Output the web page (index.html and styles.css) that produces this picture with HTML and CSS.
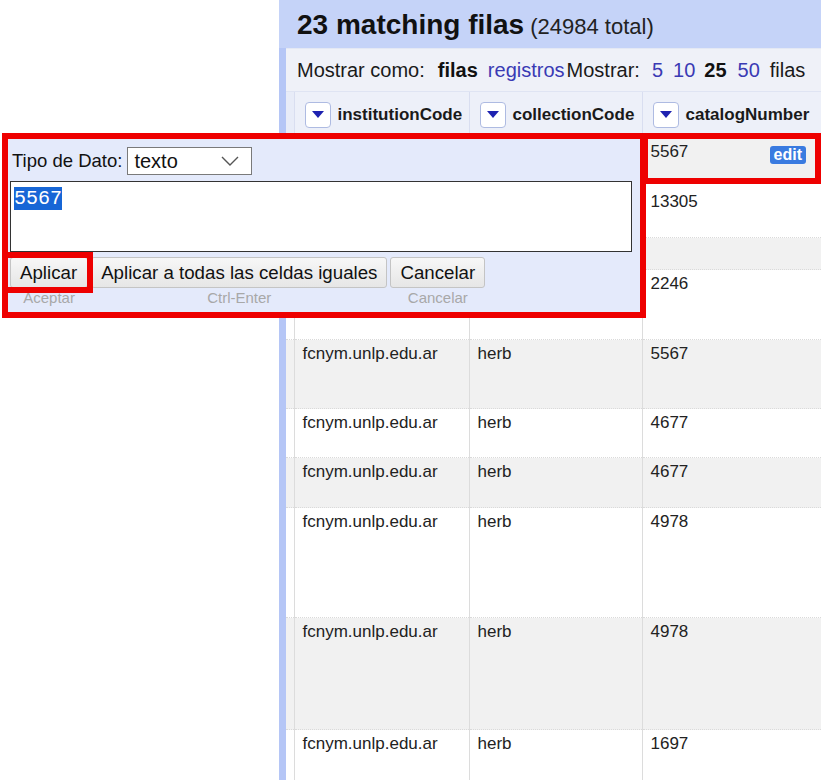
FILE: index.html
```html
<!DOCTYPE html>
<html lang="es">
<head>
<meta charset="utf-8">
<title>OpenRefine - edición de celda</title>
<link rel="stylesheet" href="styles.css">
</head>
<body>
<div class="page">
  <div class="gutter"></div>
  <div class="main">
    <div class="panel">
      <div class="summary"><span class="count">23 matching filas</span> <span class="total">(24984 total)</span></div>
      <div class="viewbar">
        <span>Mostrar como:</span>
        <span class="opt o-filas sel">filas</span>
        <span class="opt o-reg link">registros</span>
        <span class="opt o-most">Mostrar:</span>
        <span class="opt o-5 link">5</span>
        <span class="opt o-10 link">10</span>
        <span class="opt o-25 sel">25</span>
        <span class="opt o-50 link">50</span>
        <span class="opt o-f2">filas</span>
      </div>
      <table class="grid">
        <colgroup><col class="c0"><col class="c1"><col class="c2"><col class="c3"></colgroup>
        <thead>
          <tr>
            <th class="lead"></th>
            <th><div class="hcell"><span class="dd"><svg width="12" height="7" viewBox="0 0 12 7"><path d="M0 0 H12 L6 7 Z" fill="#1e22b0"/></svg></span>institutionCode</div></th>
            <th><div class="hcell"><span class="dd"><svg width="12" height="7" viewBox="0 0 12 7"><path d="M0 0 H12 L6 7 Z" fill="#1e22b0"/></svg></span>collectionCode</div></th>
            <th><div class="hcell"><span class="dd"><svg width="12" height="7" viewBox="0 0 12 7"><path d="M0 0 H12 L6 7 Z" fill="#1e22b0"/></svg></span>catalogNumber</div></th>
          </tr>
        </thead>
        <tbody>
          <tr class="odd r1"><td class="lead"></td><td></td><td></td><td class="editcell">5567<span class="edit">edit</span></td></tr>
          <tr class="r2"><td class="lead"></td><td></td><td></td><td>13305</td></tr>
          <tr class="odd r3"><td class="lead"></td><td></td><td></td><td></td></tr>
          <tr class="r4"><td class="lead"></td><td></td><td></td><td>2246</td></tr>
          <tr class="odd r5"><td class="lead"></td><td>fcnym.unlp.edu.ar</td><td>herb</td><td>5567</td></tr>
          <tr class="r6"><td class="lead"></td><td>fcnym.unlp.edu.ar</td><td>herb</td><td>4677</td></tr>
          <tr class="odd r7"><td class="lead"></td><td>fcnym.unlp.edu.ar</td><td>herb</td><td>4677</td></tr>
          <tr class="r8"><td class="lead"></td><td>fcnym.unlp.edu.ar</td><td>herb</td><td>4978</td></tr>
          <tr class="odd r9"><td class="lead"></td><td>fcnym.unlp.edu.ar</td><td>herb</td><td>4978</td></tr>
          <tr class="r10"><td class="lead"></td><td>fcnym.unlp.edu.ar</td><td>herb</td><td>1697</td></tr>
        </tbody>
      </table>
    </div>
  </div>
</div>

<div class="popup">
  <div class="typerow">
    <span class="label">Tipo de Dato:</span>
    <div class="select"><span>texto</span><svg width="18" height="10" viewBox="0 0 18 10"><path d="M1 1 L9 9 L17 1" fill="none" stroke="#555" stroke-width="1.4"/></svg></div>
  </div>
  <div class="textarea"><span class="hl">5567</span></div>
  <div class="actions">
    <button class="btn b-apply">Aplicar</button>
    <button class="btn">Aplicar a todas las celdas iguales</button>
    <button class="btn">Cancelar</button>
    <span class="hint">Aceptar</span>
    <span class="hint">Ctrl-Enter</span>
    <span class="hint">Cancelar</span>
  </div>
</div>

<div class="mark mark-popup"></div>
<div class="mark mark-apply"></div>
<div class="mark mark-cell"></div>
</body>
</html>
```

FILE: styles.css
```css
html, body {
  margin: 0;
  padding: 0;
  background: #ffffff;
  height: 780px;
  overflow: hidden;
  font-family: "Liberation Sans", Arial, sans-serif;
  color: #111;
}

.page {
  display: flex;
  height: 780px;
}

.gutter {
  width: 279px;
  flex: none;
}

.main {
  flex: 1;
  background: #b5c6f6;
  padding-left: 7px;
  display: flex;
}

.panel {
  flex: 1;
  background: #ffffff;
  display: flex;
  flex-direction: column;
}

.panel > * {
  flex: none;
}

.summary {
  height: 48px;
  background: #c5d3f8;
  margin-left: -7px;
  padding-left: 18px;
  display: flex;
  align-items: center;
  gap: 6px;
  padding-top: 2px;
  box-sizing: border-box;
  white-space: nowrap;
}

.count {
  font-size: 28px;
  font-weight: bold;
  color: #111;
}

.total {
  font-size: 22px;
  color: #222;
  margin-top: 3px;
}

.viewbar {
  height: 44px;
  box-sizing: border-box;
  background: #eff1f8;
  border-top: 1px solid #e4e8f4;
  border-bottom: 1px solid #dfe4f3;
  display: flex;
  align-items: center;
  padding-left: 11px;
  padding-top: 1px;
  font-size: 20px;
  color: #1a1a1a;
  white-space: nowrap;
}

.opt.sel { font-weight: bold; color: #111; }
.opt.link { color: #3a3ab4; }
.o-filas { margin-left: 13px; }
.o-reg { margin-left: 10px; }
.o-most { margin-left: 2px; }
.o-5 { margin-left: 12px; }
.o-10 { margin-left: 10px; }
.o-25 { margin-left: 9px; }
.o-50 { margin-left: 11px; }
.o-f2 { margin-left: 10px; }

.grid {
  border-collapse: collapse;
  table-layout: fixed;
  width: 535px;
  font-size: 17px;
}

.c0 { width: 8px; }
.c1 { width: 175px; }
.c2 { width: 173px; }
.c3 { width: 179px; }

.grid th {
  height: 45px;
  padding: 0;
  background: #edf0f9;
  border-left: 1px solid #d9def0;
  border-bottom: 1px solid #e2e6f2;
  text-align: left;
  font-weight: bold;
  color: #1a1a1a;
}

.grid th.lead {
  border-left: none;
  background: #e8ecf8;
}

.hcell {
  display: flex;
  align-items: center;
  gap: 7px;
  padding-left: 10px;
  white-space: nowrap;
}

.dd {
  width: 24px;
  height: 24px;
  background: #ffffff;
  border: 1px solid #aebbe2;
  border-radius: 4px;
  display: flex;
  align-items: center;
  justify-content: center;
}

.grid td {
  padding: 4px 0 0 8px;
  vertical-align: top;
  border-left: 1px solid #dcdcdc;
  border-top: 1px dotted #dadada;
  color: #222;
  line-height: 20px;
  white-space: nowrap;
}

.grid td.lead {
  border-left: none;
  padding: 0;
}

.grid tr.odd td { background: #f1f1f1; }

.r1 td { height: 41px; }
.r2 td { height: 45px; padding-top: 8px; }
.r3 td { height: 27px; }
.r4 td { height: 65px; }
.r5 td { height: 64px; }
.r6 td { height: 44px; }
.r7 td { height: 45px; }
.r8 td { height: 105px; }
.r9 td { height: 107px; }
.r10 td { height: 60px; }

.editcell { position: relative; }

.edit {
  position: absolute;
  right: 15px;
  top: 8px;
  background: #3a7be0;
  color: #ffffff;
  font-weight: bold;
  font-size: 16px;
  line-height: 18px;
  padding: 0 4px;
  border-radius: 3px;
}

/* popup editor */
.popup {
  position: absolute;
  left: 8px;
  top: 139px;
  width: 632px;
  height: 173px;
  background: #e4eafb;
  box-sizing: border-box;
  padding: 8px 0 0 2px;
  font-size: 18.5px;
}

.typerow {
  display: flex;
  align-items: center;
  height: 28px;
  gap: 5px;
}

.label {
  margin-left: 2px;
  color: #111;
}

.select {
  width: 125px;
  height: 28px;
  box-sizing: border-box;
  background: #ffffff;
  border: 1px solid #7a7a7a;
  display: flex;
  align-items: center;
  justify-content: space-between;
  padding: 0 12px 0 6px;
  font-size: 20px;
  color: #111;
}

.textarea {
  margin-top: 6px;
  width: 622px;
  height: 71px;
  box-sizing: border-box;
  background: #ffffff;
  border: 1.5px solid #333;
  padding: 5px 0 0 3px;
  font-family: "Liberation Mono", "DejaVu Sans Mono", monospace;
  font-size: 20px;
  line-height: 23px;
}

.hl {
  background: #1766d6;
  color: #ffffff;
}

.actions {
  margin-top: 5px;
  display: grid;
  grid-template-columns: auto auto auto;
  justify-content: start;
  column-gap: 3px;
}

.btn {
  height: 31px;
  font-family: "Liberation Sans", Arial, sans-serif;
  font-size: 18.7px;
  color: #111;
  padding: 0 9px;
  border: 1px solid #c4c4c4;
  border-radius: 3px;
  background: linear-gradient(#f7f7f7, #e6e6e6);
}

.b-apply { padding: 0 10px 0 9px; }

.hint {
  text-align: center;
  font-size: 15px;
  color: #a8a8a8;
  line-height: 18px;
  margin-top: 1px;
}

/* red annotation boxes */
.mark {
  position: absolute;
  border: 6px solid #ee0000;
  box-sizing: border-box;
}

.mark-popup { left: 2px; top: 133px; width: 644px; height: 185px; }
.mark-apply { left: 2px; top: 252px; width: 91px; height: 41px; }
.mark-cell { left: 642px; top: 133px; width: 179px; height: 51px; }
```
